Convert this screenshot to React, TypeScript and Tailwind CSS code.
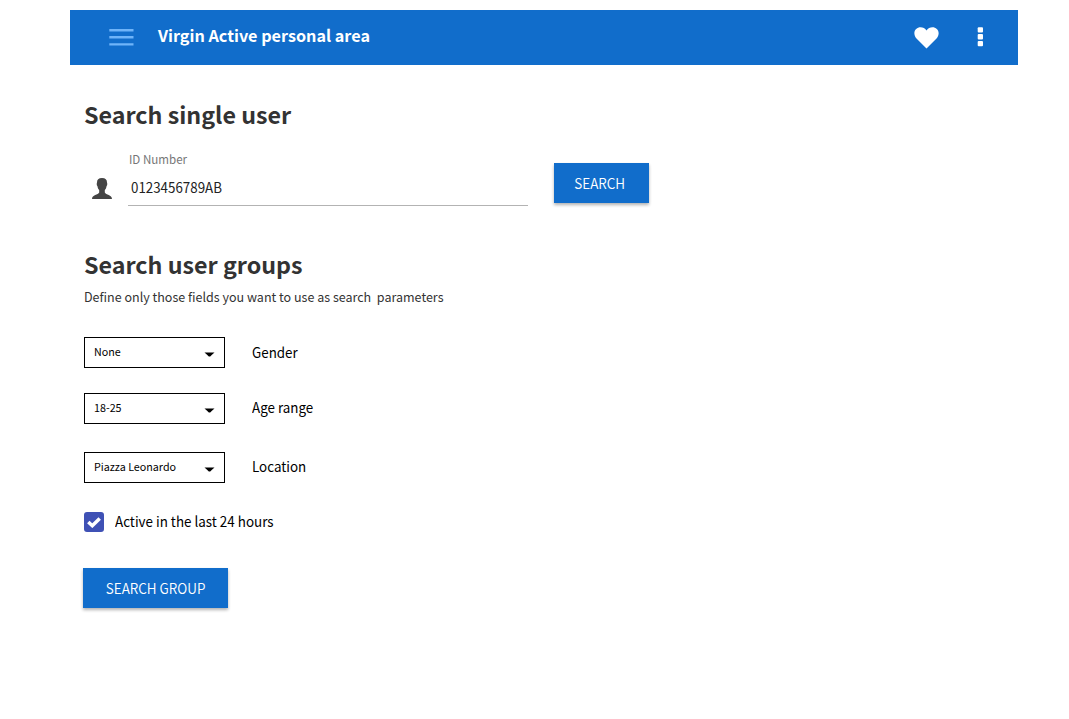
import React from "react";

function Select({ value }: { value: string }) {
  return (
    <button className="flex h-[31px] w-[141px] items-center justify-between border border-black pr-[9px] pl-[9px] text-left text-[11px]">
      <span className="-mt-[2px] origin-left scale-x-[.975]">{value}</span>
      <svg width="11" height="5" viewBox="0 0 11 5" className="mt-1"><path d="M.5 .4h10Q8 2.500 6.500 4.200Q5.500 4.800 4.500 4.200Q3 2.500 .5 .4z" /></svg>
    </button>
  );
}

function Field({ label, value, raised = false }: { label: string; value: string; raised?: boolean }) {
  return (
    <div className="flex items-center gap-[27px]">
      <Select value={value} />
      <span className={`${raised ? "-mt-[3px]" : "-mt-px"} origin-left scale-x-[.93] text-[14.4px] leading-5`}>{label}</span>
    </div>
  );
}

export default function App() {
  return (
    <div className="h-[719px] overflow-hidden bg-white pt-[10px] pl-[70px] font-['Noto_Sans_CJK_SC',sans-serif] text-black">
      <header className="flex h-[55px] w-[948px] items-center bg-[#116dcb] text-white">
        <svg className="-mt-px ml-[39px]" width="25" height="18" viewBox="0 0 25 18" stroke="#6fb4f9" strokeWidth="2.400"><path d="M.3 2.200h24.200M.3 9.300h24.200M.3 16.400h24.200" /></svg>
        <h1 className="-mt-[5px] ml-6 text-[16.2px] leading-6 font-bold">Virgin Active personal area</h1>
        <svg className="mr-[38px] ml-auto" width="25" height="22" viewBox="0 0 25 22" fill="white"><path d="M12.500 21.500L2 11C-2 5 2 .3 6.500 .3C9 .3 11 1.500 12.500 3.500C14 1.500 16 .3 18.500 .3C23 .3 27 5 23 11Z" /></svg>
        <svg className="mr-[35px]" width="6" height="21" viewBox="0 0 6 21" fill="white"><rect y=".2" x=".7" width="5.300" height="5.300" rx="1" /><rect x=".7" y="7.100" width="5.300" height="5.300" rx="1" /><rect x=".7" y="14" width="5.300" height="5.300" rx="1" /></svg>
      </header>
      <main className="pl-[14px]">
        <h2 className="mt-[33px] text-[23.25px] leading-8 font-bold text-[#333]">Search single user</h2>
        <div className="mt-[21px] flex h-[56px]">
          <svg className="mt-[27px] ml-2" width="20" height="22" viewBox="0 0 20 22" fill="#444"><path d="M10 0c3.500 0 5 1.500 5 4.500.5 1 .3 3-.4 3.500-.3 2-.8 3-1.800 4v2.500c1 2.500 7.200 2 7.200 6.500H0c0-4.500 6.200-4 7.200-6.500v-2.500c-1-1-1.500-2-1.800-4C4.700 7.500 4.500 5.500 5 4.500c0-3 1.500-4.500 5-4.500z" /></svg>
          <div className="ml-4 h-[55px] w-[400px] border-b border-[#b3b3b3]">
            <div className="origin-left scale-x-[.965] pl-px text-[12px] leading-4 text-[#777]">ID Number</div>
            <div className="mt-[10px] ml-[3px] origin-left scale-x-[.927] text-[14.4px] leading-5 text-[#222]">0123456789AB</div>
          </div>
          <button className="mt-3 ml-[26px] h-10 w-[95px] bg-[#116dcb] text-[15px] font-[350] text-white shadow-[0_2px_3px_rgba(0,0,0,.3)]"><span className="inline-block -translate-x-[1.5px] scale-x-[.9]">SEARCH</span></button>
        </div>
        <h2 className="mt-[41px] text-[23.25px] leading-8 font-bold text-[#333]">Search user groups</h2>
        <p className="mt-[7px] origin-left scale-x-[.963] text-[13px] leading-5 whitespace-pre text-[#333]">Define only those fields you want to use as search  parameters</p>
        <div className="mt-[30px]"><Field label="Gender" value="None" /></div>
        <div className="mt-[25px]"><Field label="Age range" value="18-25" raised /></div>
        <div className="mt-[28px]"><Field label="Location" value="Piazza Leonardo" raised /></div>
        <label className="mt-[29px] flex h-5 items-center gap-[11px] text-[14.4px] leading-5">
          <span className="flex size-5 items-center justify-center rounded-[3px] bg-[#3f51b5]"><svg width="14" height="11" viewBox="0 0 14 11" fill="none" stroke="white" strokeWidth="3.500"><path d="M1.300 5l4 3.700 7.400-7.200" /></svg></span>
          <span className="-mt-[3px] origin-left scale-x-[.932]">Active in the last 24 hours</span>
        </label>
        <button className="mt-9 -ml-px h-10 w-[145px] bg-[#116dcb] text-[15px] font-[350] text-white shadow-[0_2px_3px_rgba(0,0,0,.3)]"><span className="inline-block translate-x-[.3px] scale-x-[.9]">SEARCH GROUP</span></button>
      </main>
    </div>
  );
}
